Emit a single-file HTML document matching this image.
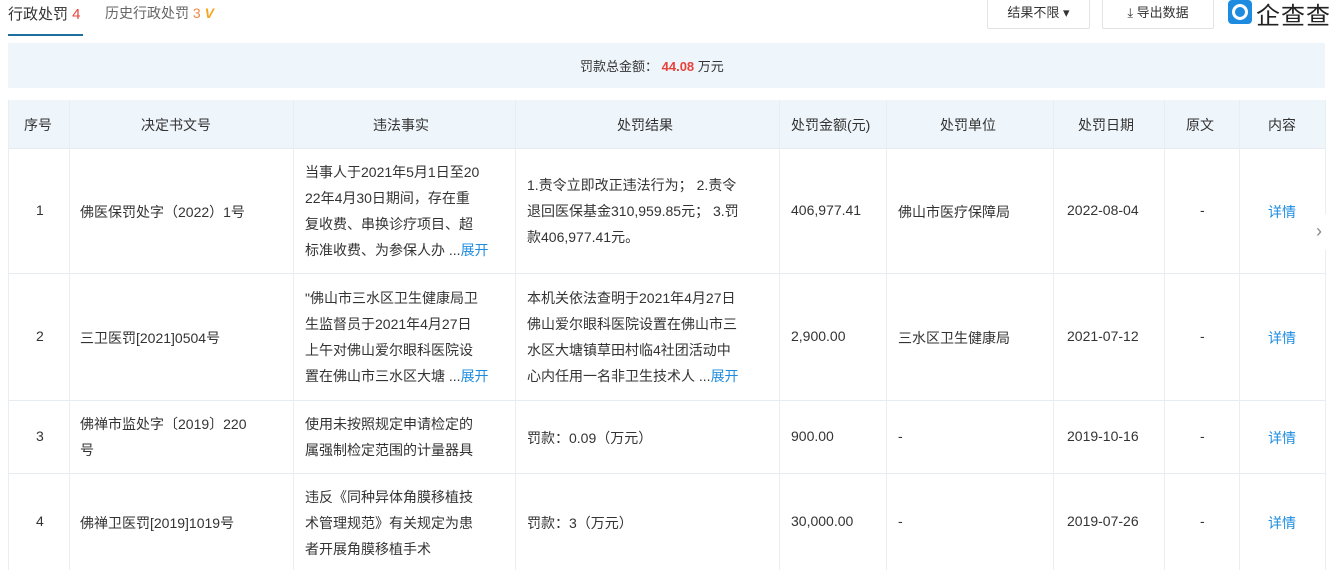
<!DOCTYPE html><html><head><meta charset="utf-8"><style>
*{margin:0;padding:0;box-sizing:border-box}
body{width:1332px;height:570px;overflow:hidden;background:#fff;font-family:"Liberation Sans","Noto Sans CJK SC",sans-serif;color:#333;font-size:14px;position:relative}
.a{position:absolute}
.hl{position:absolute;left:8px;width:1317px;height:1px;background:#e6ecf2}
.vl{position:absolute;top:100px;height:470px;width:1px;background:#e9eef3}
.c{position:absolute;display:flex;align-items:center}
.t{line-height:26px}
.b{color:#1d8ce0}
</style></head><body>
<div class="a" style="left:8px;top:3px;font-size:15px;color:#333">行政处罚 <span style="color:#e8433b">4</span></div>
<div class="a" style="left:8px;top:34px;width:75px;height:2px;background:#1d6f9c"></div>
<div class="a" style="left:105px;top:3px;font-size:14px;color:#666">历史行政处罚 <span style="color:#f08a4b">3</span> <b style="color:#f5a623;font-style:italic">V</b></div>
<div class="a" style="left:987px;top:-2px;width:103px;height:31px;border:1px solid #e3e3e3;border-radius:2px;font-size:13px;text-align:center;line-height:28px">结果不限 ▾</div>
<div class="a" style="left:1102px;top:-2px;width:112px;height:31px;border:1px solid #e3e3e3;border-radius:2px;font-size:13px;text-align:center;line-height:28px">⤓ 导出数据</div>
<div class="a" style="left:1228px;top:0;width:24px;height:24px;background:#1d8ce0;border-radius:4px"><div class="a" style="left:4px;top:4px;width:16px;height:16px;border:3px solid #fff;border-radius:50%"></div></div>
<div class="a" style="left:1256px;top:-4px;font-size:24px;color:#222;letter-spacing:1px">企查查</div>
<div class="a" style="left:8px;top:43px;width:1317px;height:45px;background:#eef5fb"></div>
<div class="a" style="left:580px;top:56px;font-size:13px">罚款总金额： <b style="color:#e8433b">44.08</b> 万元</div>
<div class="a" style="left:8px;top:100px;width:1317px;height:48px;background:#eef5fb"></div>
<div class="hl" style="top:148px"></div><div class="hl" style="top:273px"></div><div class="hl" style="top:400px"></div><div class="hl" style="top:473px"></div>
<div class="vl" style="left:8px"></div><div class="vl" style="left:69px"></div><div class="vl" style="left:293px"></div><div class="vl" style="left:515px"></div><div class="vl" style="left:779px"></div><div class="vl" style="left:886px"></div><div class="vl" style="left:1053px"></div><div class="vl" style="left:1164px"></div><div class="vl" style="left:1239px"></div><div class="vl" style="left:1325px"></div>
<div class="a" style="top:115px;left:24px">序号</div><div class="a" style="top:115px;left:141px">决定书文号</div><div class="a" style="top:115px;left:373px">违法事实</div><div class="a" style="top:115px;left:617px">处罚结果</div><div class="a" style="top:115px;left:791px">处罚金额(元)</div><div class="a" style="top:115px;left:940px">处罚单位</div><div class="a" style="top:115px;left:1078px">处罚日期</div><div class="a" style="top:115px;left:1186px">原文</div><div class="a" style="top:115px;left:1268px">内容</div>
<!-- row1 -->
<div class="a" style="top:202px;left:36px">1</div>
<div class="a" style="top:202px;left:80px">佛医保罚处字（2022）1号</div>
<div class="a t" style="top:159px;left:305px;width:205px">当事人于2021年5月1日至20<br>22年4月30日期间，存在重<br>复收费、串换诊疗项目、超<br>标准收费、为参保人办 ...<span class="b">展开</span></div>
<div class="a t" style="top:172px;left:527px;width:250px">1.责令立即改正违法行为； 2.责令<br>退回医保基金310,959.85元； 3.罚<br>款406,977.41元。</div>
<div class="a" style="top:202px;left:791px">406,977.41</div>
<div class="a" style="top:202px;left:898px">佛山市医疗保障局</div>
<div class="a" style="top:202px;left:1067px">2022-08-04</div>
<div class="a" style="top:202px;left:1200px">-</div>
<div class="a b" style="top:202px;left:1268px">详情</div>
<div class="a" style="top:214px;left:1306px;width:26px;height:36px;background:#fff;color:#888;font-size:18px;text-align:center;line-height:34px">›</div>
<!-- row2 -->
<div class="a" style="top:328px;left:36px">2</div>
<div class="a" style="top:328px;left:80px">三卫医罚[2021]0504号</div>
<div class="a t" style="top:285px;left:305px;width:205px">"佛山市三水区卫生健康局卫<br>生监督员于2021年4月27日<br>上午对佛山爱尔眼科医院设<br>置在佛山市三水区大塘 ...<span class="b">展开</span></div>
<div class="a t" style="top:285px;left:527px;width:250px">本机关依法查明于2021年4月27日<br>佛山爱尔眼科医院设置在佛山市三<br>水区大塘镇草田村临4社团活动中<br>心内任用一名非卫生技术人 ...<span class="b">展开</span></div>
<div class="a" style="top:328px;left:791px">2,900.00</div>
<div class="a" style="top:328px;left:898px">三水区卫生健康局</div>
<div class="a" style="top:328px;left:1067px">2021-07-12</div>
<div class="a" style="top:328px;left:1200px">-</div>
<div class="a b" style="top:328px;left:1268px">详情</div>
<!-- row3 -->
<div class="a" style="top:428px;left:36px">3</div>
<div class="a t" style="top:411px;left:80px;width:205px">佛禅市监处字〔2019〕220<br>号</div>
<div class="a t" style="top:411px;left:305px;width:205px">使用未按照规定申请检定的<br>属强制检定范围的计量器具</div>
<div class="a" style="top:428px;left:527px">罚款：0.09（万元）</div>
<div class="a" style="top:428px;left:791px">900.00</div>
<div class="a" style="top:428px;left:898px">-</div>
<div class="a" style="top:428px;left:1067px">2019-10-16</div>
<div class="a" style="top:428px;left:1200px">-</div>
<div class="a b" style="top:428px;left:1268px">详情</div>
<!-- row4 -->
<div class="a" style="top:513px;left:36px">4</div>
<div class="a" style="top:513px;left:80px">佛禅卫医罚[2019]1019号</div>
<div class="a t" style="top:484px;left:305px;width:205px">违反《同种异体角膜移植技<br>术管理规范》有关规定为患<br>者开展角膜移植手术</div>
<div class="a" style="top:513px;left:527px">罚款：3（万元）</div>
<div class="a" style="top:513px;left:791px">30,000.00</div>
<div class="a" style="top:513px;left:898px">-</div>
<div class="a" style="top:513px;left:1067px">2019-07-26</div>
<div class="a" style="top:513px;left:1200px">-</div>
<div class="a b" style="top:513px;left:1268px">详情</div>
</body></html>
